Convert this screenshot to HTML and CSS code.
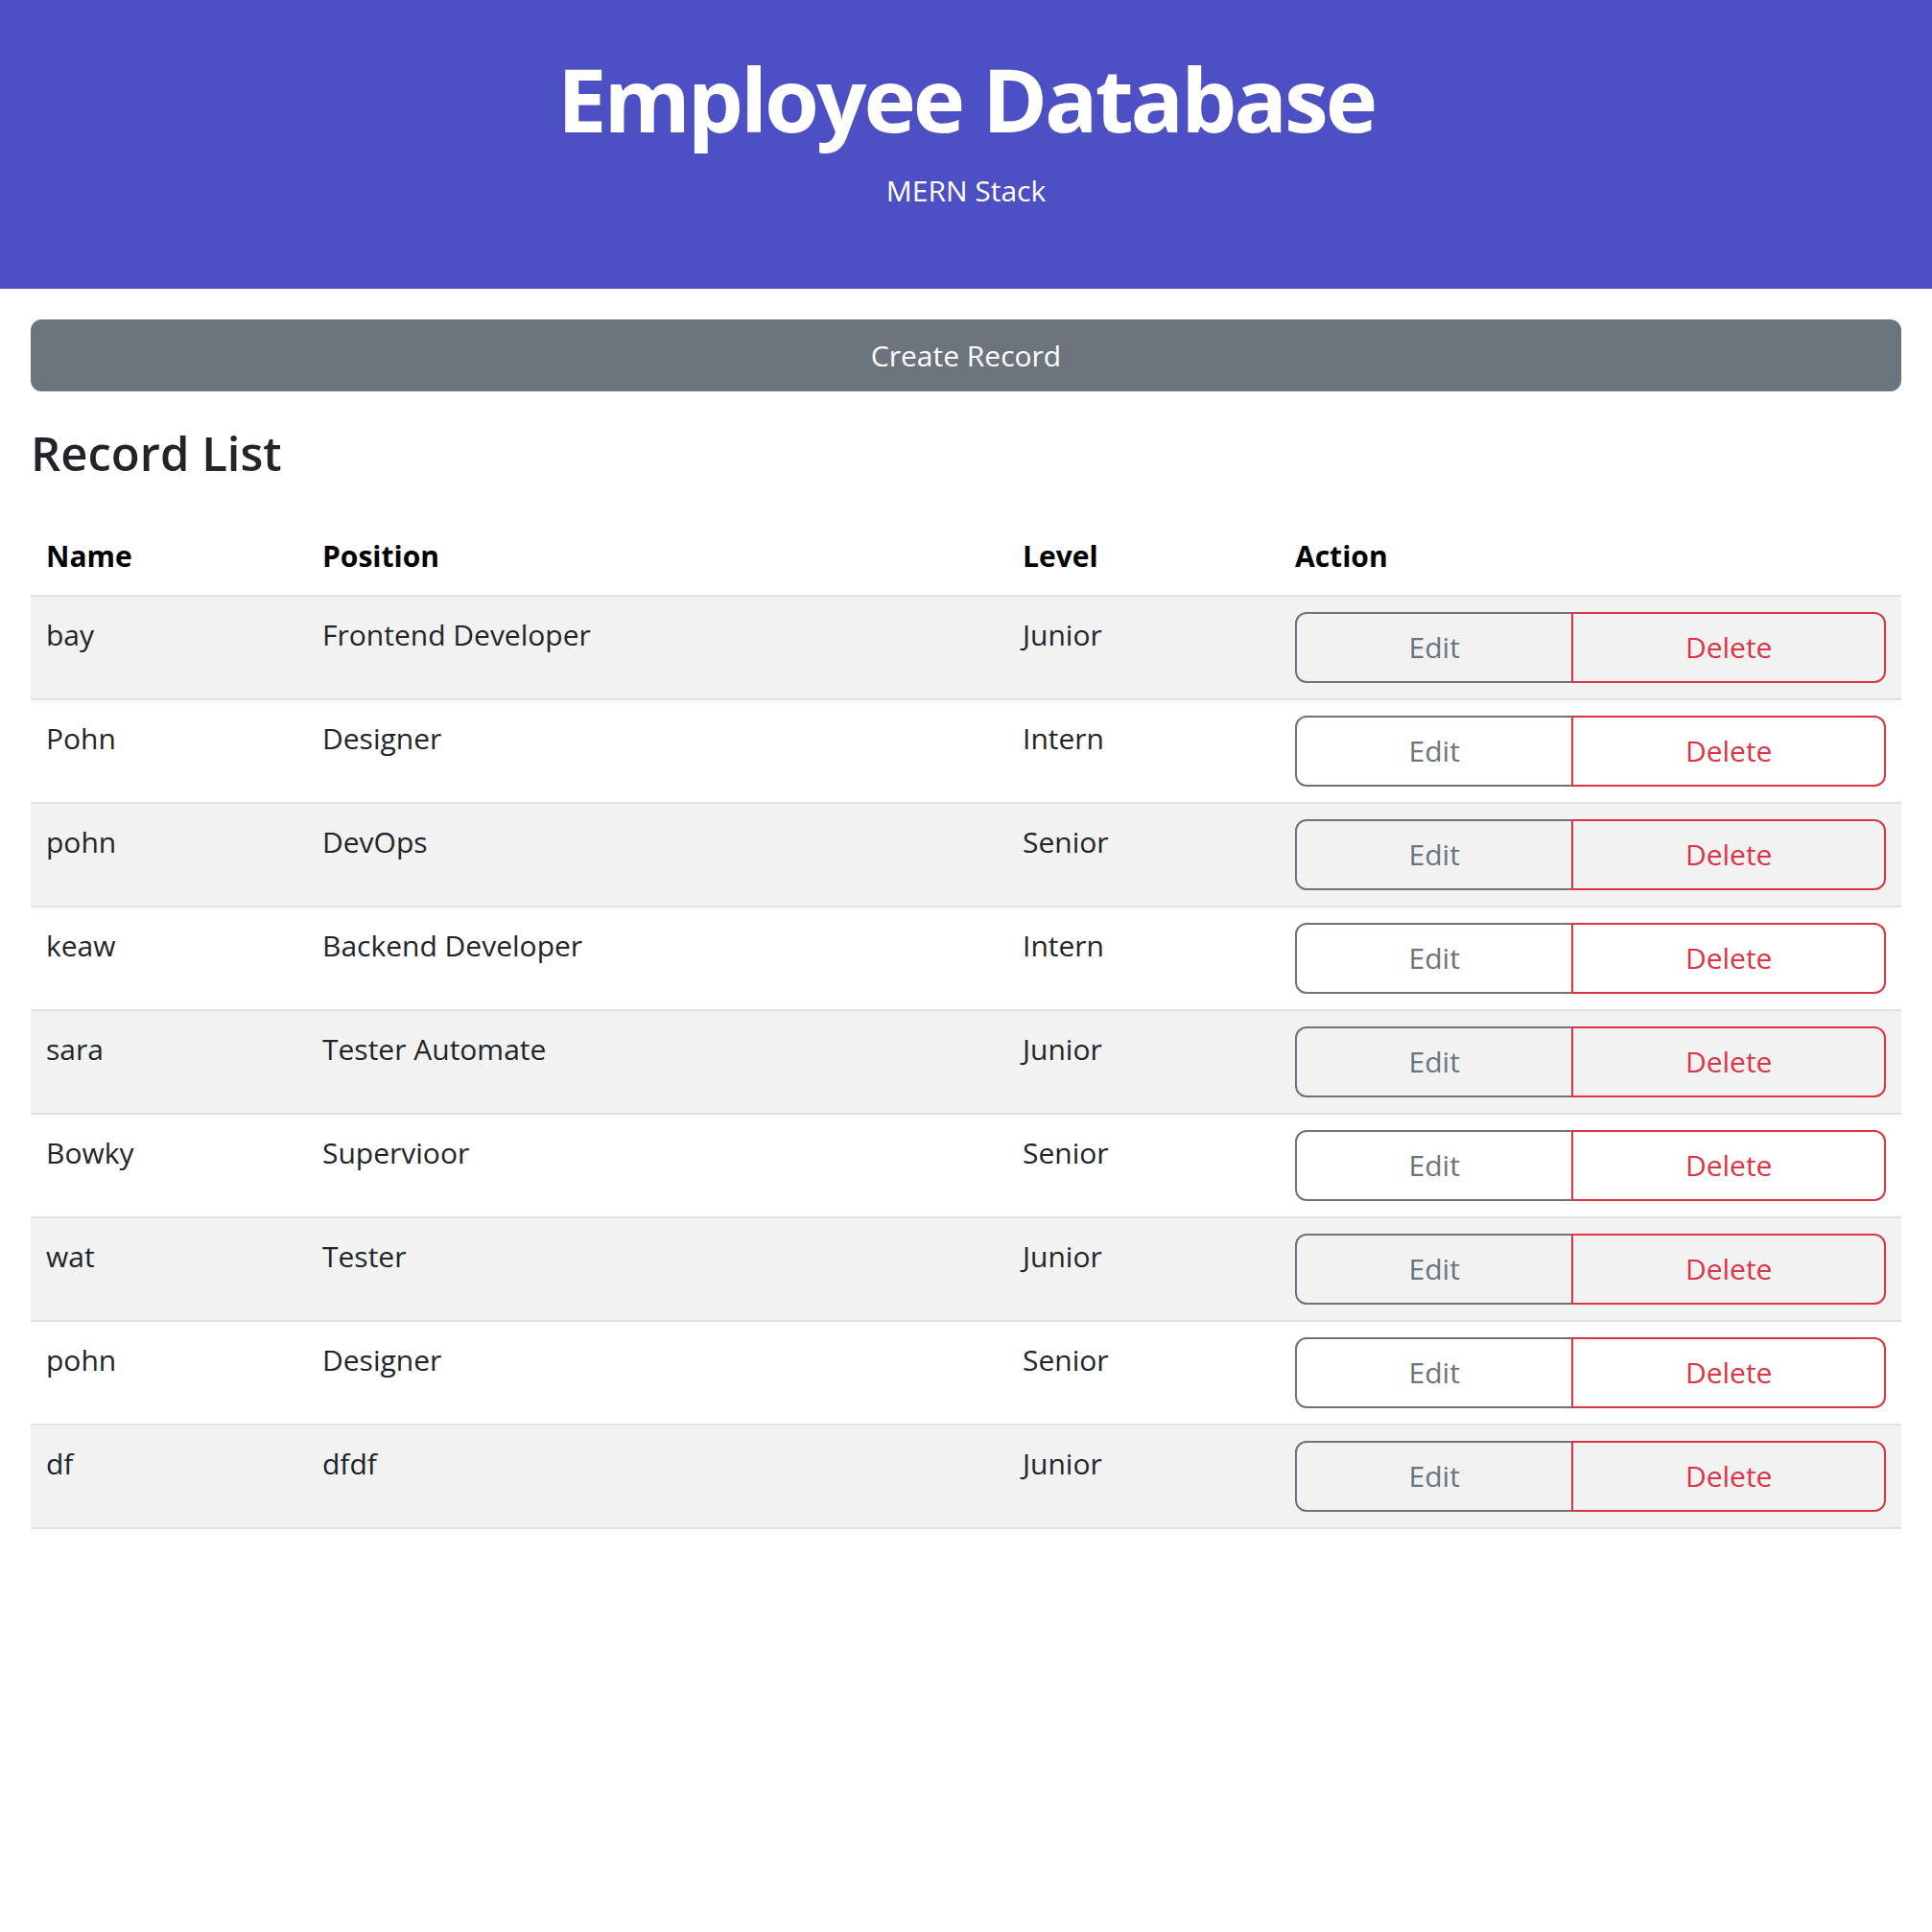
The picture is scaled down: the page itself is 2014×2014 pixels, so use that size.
FILE: index.html
```html
<!DOCTYPE html>
<html lang="en">
<head>
<meta charset="utf-8">
<title>Employee Database</title>
<link rel="stylesheet" href="styles.css">
</head>
<body>
<header class="hero">
  <h1 class="hero-title">Employee Database</h1>
  <p class="hero-sub">MERN Stack</p>
</header>
<main class="container">
  <button class="create-btn" type="button">Create Record</button>
  <h3 class="list-title">Record List</h3>
  <table class="records">
    <colgroup>
      <col class="c-name"><col class="c-pos"><col class="c-level"><col class="c-action">
    </colgroup>
    <thead>
      <tr><th>Name</th><th>Position</th><th>Level</th><th>Action</th></tr>
    </thead>
    <tbody>
      <tr><td>bay</td><td>Frontend Developer</td><td>Junior</td><td><div class="btn-group"><button class="btn btn-edit">Edit</button><button class="btn btn-delete">Delete</button></div></td></tr>
      <tr><td>Pohn</td><td>Designer</td><td>Intern</td><td><div class="btn-group"><button class="btn btn-edit">Edit</button><button class="btn btn-delete">Delete</button></div></td></tr>
      <tr><td>pohn</td><td>DevOps</td><td>Senior</td><td><div class="btn-group"><button class="btn btn-edit">Edit</button><button class="btn btn-delete">Delete</button></div></td></tr>
      <tr><td>keaw</td><td>Backend Developer</td><td>Intern</td><td><div class="btn-group"><button class="btn btn-edit">Edit</button><button class="btn btn-delete">Delete</button></div></td></tr>
      <tr><td>sara</td><td>Tester Automate</td><td>Junior</td><td><div class="btn-group"><button class="btn btn-edit">Edit</button><button class="btn btn-delete">Delete</button></div></td></tr>
      <tr><td>Bowky</td><td>Supervioor</td><td>Senior</td><td><div class="btn-group"><button class="btn btn-edit">Edit</button><button class="btn btn-delete">Delete</button></div></td></tr>
      <tr><td>wat</td><td>Tester</td><td>Junior</td><td><div class="btn-group"><button class="btn btn-edit">Edit</button><button class="btn btn-delete">Delete</button></div></td></tr>
      <tr><td>pohn</td><td>Designer</td><td>Senior</td><td><div class="btn-group"><button class="btn btn-edit">Edit</button><button class="btn btn-delete">Delete</button></div></td></tr>
      <tr><td>df</td><td>dfdf</td><td>Junior</td><td><div class="btn-group"><button class="btn btn-edit">Edit</button><button class="btn btn-delete">Delete</button></div></td></tr>
    </tbody>
  </table>
</main>
</body>
</html>
```
FILE: styles.css
```css
* { box-sizing: border-box; }

body {
  margin: 0;
  font-family: "Open Sans", "Noto Sans", sans-serif;
  font-size: 30px;
  line-height: 48px;
  color: #212529;
  background: #fff;
}

.hero {
  background: #4d4fc4;
  color: #fff;
  text-align: center;
  height: 301px;
  padding-top: 48px;
}

.hero-title {
  margin: 0;
  font-size: 92px;
  font-weight: 700;
  line-height: 1.2;
  letter-spacing: -3px;
}

.hero-sub {
  margin: 18px 0 0;
  font-size: 30px;
  line-height: 45px;
}

.container {
  padding: 0 32px;
}

.create-btn {
  display: block;
  width: 100%;
  height: 75px;
  margin-top: 32px;
  border: 1px solid #6c757d;
  border-radius: 11px;
  background: #6c757d;
  color: #fff;
  font-family: inherit;
  font-size: 30px;
  line-height: 48px;
}

.list-title {
  margin: 35px 0 38px;
  font-size: 49px;
  font-weight: 600;
  line-height: 1.2;
}

.records {
  width: 100%;
  border-collapse: collapse;
  table-layout: fixed;
}

.c-name { width: 288px; }
.c-pos { width: 730px; }
.c-level { width: 284px; }

.records th,
.records td {
  padding: 16px;
  text-align: left;
  vertical-align: top;
  border-bottom: 2px solid #dee2e6;
}

.records th {
  color: #000;
  font-weight: 700;
}

.records tbody tr:nth-child(odd) td {
  background: #f2f2f2;
}

.btn-group {
  display: flex;
  width: 100%;
}

.btn {
  flex: 1 1 auto;
  height: 74px;
  padding: 11px 24px;
  font-family: inherit;
  font-size: 30px;
  line-height: 48px;
  background: transparent;
  border: 2px solid;
}

.btn-edit {
  color: #6c757d;
  border-color: #6c757d;
  border-radius: 12px 0 0 12px;
}

.btn-delete {
  position: relative;
  margin-left: -2px;
  color: #dc3545;
  border-color: #dc3545;
  border-radius: 0 12px 12px 0;
}
```
